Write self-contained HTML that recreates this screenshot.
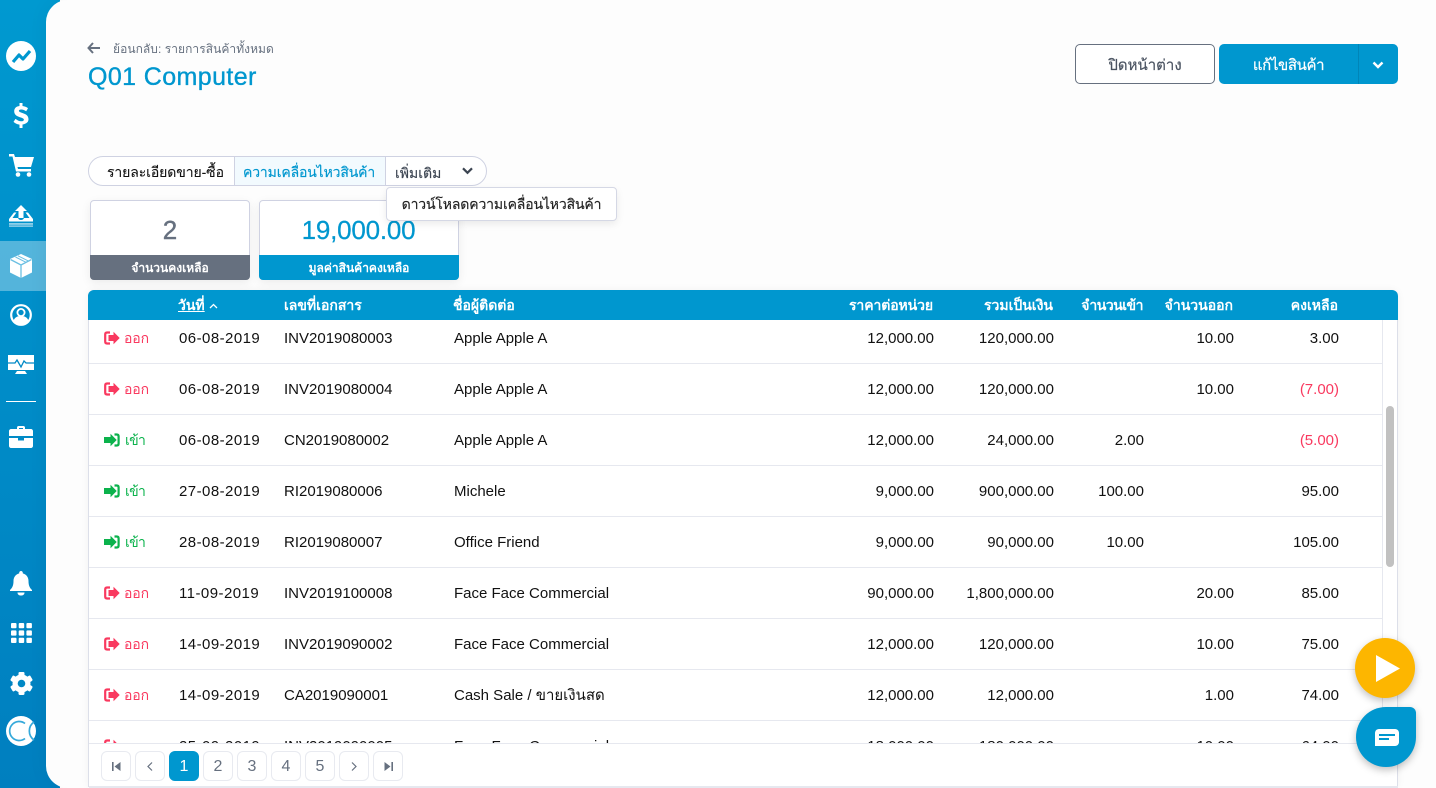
<!DOCTYPE html>
<html lang="th"><head><meta charset="utf-8"><title>Q01 Computer</title>
<style>
*{box-sizing:border-box}
html,body{margin:0;padding:0}
body{width:1436px;height:788px;overflow:hidden;position:relative;font-family:"Liberation Sans","Noto Sans CJK SC",sans-serif;font-size:14px;color:#111;background:#fff}
.a{position:absolute;white-space:nowrap}
#side{left:0;top:0;width:60px;height:788px;background:linear-gradient(#0099d0,#007fbf)}
#main{left:46px;top:0;width:1390px;height:788px;background:#fdfdfd;border-radius:22px 0 0 22px;box-shadow:0 0 20px rgba(0,0,0,.05)}
#active{left:0;top:241px;width:46px;height:50px;background:rgba(255,255,255,.33)}
.ic{position:absolute;fill:#fff}
.row{position:absolute;left:89px;width:1293px;height:51px;border-bottom:1px solid #e6e8ef}
.c{position:absolute;top:17px;line-height:17px;font-size:15px;white-space:nowrap}
.d{letter-spacing:.45px}
.t{font-size:14px;letter-spacing:-.1px;line-height:16px}
.tg{left:36px;font-size:14px;letter-spacing:-.7px;line-height:16px}
.r{text-align:right}
.red{color:#f9395f}.grn{color:#0bb24c}
.h{position:absolute;top:290px;line-height:31px;color:#fff;font-weight:bold;font-size:14px;white-space:nowrap}
.pg{position:absolute;top:751px;width:30px;height:30px;border:1px solid #e8eaf0;border-radius:6px;background:#fff;color:#66707f;text-align:center;line-height:29px;font-size:16px}
</style></head><body>
<div class="a" id="side"></div>
<div class="a" id="active"></div>
<div class="a" id="main"></div>

<svg class="ic" style="left:6px;top:41px" width="30" height="30" viewBox="0 0 30 30"><circle cx="15" cy="15" r="15"/><path d="M7 21l6-7 4 4 7-8" fill="none" stroke="#0097cf" stroke-width="3.2" stroke-linejoin="round"/></svg>
<svg class="ic" style="left:13px;top:103px" width="16" height="25" viewBox="0 0 16 25"><path d="M6.500 0h3v3c2.500.3 4.500 1.300 5.500 2.300l-1.800 3C11.800 7.300 10 6.500 8.200 6.500c-1.500 0-2.300.5-2.300 1.300 0 2.700 9.600 1.700 9.600 8.500 0 2.700-2.100 4.700-6 5.200V25h-3v-3.400C4 21.300 1.800 20.200.5 18.900l2-3c1.600 1.300 3.700 2.400 5.600 2.400 1.800 0 2.800-.6 2.800-1.700 0-2.800-9.700-1.700-9.700-8.400 0-2.800 2-4.900 5.300-5.200z"/></svg>
<svg class="ic" style="left:9px;top:154px" width="25" height="23" viewBox="0 0 25 23"><path d="M0 0h5l1 3h19l-3 10H8.500l.5 2h13v2.500H7L3.500 2.500H0z"/><circle cx="9" cy="20.500" r="2.300"/><circle cx="20" cy="20.500" r="2.300"/></svg>
<svg class="ic" style="left:8px;top:205px" width="26" height="22" viewBox="0 0 26 22"><path d="M13 0l6 6h-3.500v7h-5V6H7z"/><path d="M8.500 7.500H6L1 14v2.500h24V14l-5-6.500h-2.500l4 5.500H16c-.5 1.300-1.500 2-3 2s-2.500-.7-3-2H4.500z"/><rect x="1" y="18.300" width="24" height="1.300" opacity=".8"/><rect x="1" y="20.500" width="24" height="1.200" opacity=".7"/></svg>
<svg class="ic" style="left:9px;top:254px" width="24" height="24" viewBox="0 0 24 24"><path d="M12 0l11 5v13.500L12 24 1 18.500V5z"/><path d="M1.500 5.500L12 11l10.500-5.500M12 11v13" fill="none" stroke="#6bbfe2" stroke-width="1.300"/><path d="M6.500 3l10.500 5.300M9 1.800l10.500 5.300" fill="none" stroke="#6bbfe2" stroke-width="1"/></svg>
<svg class="ic" style="left:10px;top:304px" width="22" height="22" viewBox="0 0 22 22"><circle cx="11" cy="11" r="9.800" fill="none" stroke="#fff" stroke-width="2.200"/><circle cx="11" cy="8.500" r="3.600" fill="none" stroke="#fff" stroke-width="1.800"/><path d="M3.500 17c1-3.500 3.500-5 7.500-5s6.500 1.500 7.500 5c-2 3-4.500 4-7.500 4s-5.500-1-7.500-4z"/></svg>
<svg class="ic" style="left:8px;top:355px" width="26" height="21" viewBox="0 0 26 21"><path d="M0 0h26v15H0z"/><path d="M9 16h8l2 3H7z"/><path d="M0 8h7l2-3 4 7 3-6 2 2h8" fill="none" stroke="#0089c6" stroke-width="1.300"/></svg>
<div class="a" style="left:6px;top:401px;width:30px;height:1px;background:#fff"></div>
<svg class="ic" style="left:9px;top:426px" width="24" height="22" viewBox="0 0 24 22"><path d="M8 3V1.500C8 .700 8.700 0 9.500 0h5c.8 0 1.500.7 1.500 1.500V3h6c1 0 2 1 2 2v5H0V5c0-1 1-2 2-2zm2 0h4V2h-4z"/><path d="M0 12h9v2.500h6V12h9v8c0 1-1 2-2 2H2c-1 0-2-1-2-2z"/></svg>
<svg class="ic" style="left:10px;top:571px" width="22" height="25" viewBox="0 0 22 25"><path d="M11 0c1 0 1.800.8 1.800 1.800v.6C16.500 3.300 18.500 6.500 18.500 10c0 5 1.500 7 3.500 9v1H0v-1c2-2 3.500-4 3.500-9 0-3.500 2-6.700 5.700-7.600v-.6C9.200.8 10 0 11 0z"/><path d="M7.500 21.500h7c0 2-1.500 3-3.500 3s-3.500-1-3.500-3z"/></svg>
<svg class="ic" style="left:11px;top:623px" width="21" height="20" viewBox="0 0 21 20"><rect width="5.500" height="5.200" rx="1"/><rect x="7.700" width="5.500" height="5.200" rx="1"/><rect x="15.400" width="5.500" height="5.200" rx="1"/><rect y="7.400" width="5.500" height="5.200" rx="1"/><rect x="7.700" y="7.400" width="5.500" height="5.200" rx="1"/><rect x="15.400" y="7.400" width="5.500" height="5.200" rx="1"/><rect y="14.800" width="5.500" height="5.200" rx="1"/><rect x="7.700" y="14.800" width="5.500" height="5.200" rx="1"/><rect x="15.400" y="14.800" width="5.500" height="5.200" rx="1"/></svg>
<svg class="ic" style="left:10px;top:672px" width="23" height="23" viewBox="0 0 23 23"><g><rect x="8.500" y="0" width="6" height="23" rx="1.200"/><rect x="8.500" y="0" width="6" height="23" rx="1.200" transform="rotate(60 11.500 11.500)"/><rect x="8.500" y="0" width="6" height="23" rx="1.200" transform="rotate(120 11.500 11.500)"/><circle cx="11.500" cy="11.500" r="9"/></g><circle cx="11.500" cy="11.500" r="3.800" fill="#0088c5"/></svg>
<svg class="ic" style="left:6px;top:716px" width="30" height="30" viewBox="0 0 30 30"><circle cx="15" cy="15" r="15"/><path d="M19 7.500a9.500 9.500 0 100 15" fill="none" stroke="#35a9da" stroke-width="1.700"/><path d="M28 6a11 11 0 000 18" fill="none" stroke="#35a9da" stroke-width="1.700"/></svg>

<svg class="a" style="left:87px;top:42px" width="14" height="12" viewBox="0 0 14 12"><path d="M6 1L1.500 6 6 11M2 6h11" fill="none" stroke="#66707f" stroke-width="2"/></svg>
<div class="a" style="left:113px;top:41px;line-height:17px;font-size:12px;letter-spacing:.05px;color:#66707f">ย้อนกลับ: รายการสินค้าทั้งหมด</div>
<div class="a" style="left:88px;top:62px;line-height:30px;font-size:25px;color:#0097cf;letter-spacing:.4px;-webkit-text-stroke:.35px #0097cf">Q01 Computer</div>

<div class="a" style="left:1075px;top:44px;width:140px;height:40px;border:1px solid #66707f;border-radius:5px;background:#fff;text-align:center;line-height:41px;font-size:15px;color:#4a5361;-webkit-text-stroke:.2px #4a5361">ปิดหน้าต่าง</div>
<div class="a" style="left:1219px;top:44px;width:179px;height:40px;border-radius:5px;background:#0097cf;color:#fff"></div>
<div class="a" style="left:1219px;top:44px;width:140px;height:40px;text-align:center;line-height:43px;font-size:15px;letter-spacing:-.4px;color:#fff;border-right:1px solid #0085b8;-webkit-text-stroke:.2px #fff">แก้ไขสินค้า</div>
<svg class="a" style="left:1372px;top:61px" width="12" height="9" viewBox="0 0 12 9"><path d="M1.500 1.500L6 6l4.500-4.500" fill="none" stroke="#fff" stroke-width="2.400"/></svg>

<div class="a" style="left:88px;top:156px;width:399px;height:30px;border:1px solid #cfd2e2;border-radius:15px;background:#fff"></div>
<div class="a" style="left:234px;top:157px;width:152px;height:28px;background:#f2fafe;border-left:1px solid #cfd2e2;border-right:1px solid #cfd2e2"></div>
<div class="a" style="left:107px;top:164px;line-height:17px;font-size:14px;letter-spacing:-.1px;color:#111;-webkit-text-stroke:.1px #111">รายละเอียดขาย-ซื้อ</div>
<div class="a" style="left:243px;top:164px;line-height:17px;font-size:14px;letter-spacing:-.15px;color:#0097cf;-webkit-text-stroke:.15px #0097cf">ความเคลื่อนไหวสินค้า</div>
<div class="a" style="left:395px;top:165px;line-height:17px;font-size:14px;color:#3c4552;-webkit-text-stroke:.15px #3c4552">เพิ่มเติม</div>
<svg class="a" style="left:462px;top:167px" width="11" height="8" viewBox="0 0 11 8"><path d="M1 1.300l4.500 4.500L10 1.300" fill="none" stroke="#3c4552" stroke-width="2.200"/></svg>

<div class="a" style="left:90px;top:200px;width:160px;height:80px;border:1px solid #cfd2e2;border-radius:4px;background:#fff;box-shadow:0 3px 10px rgba(0,0,0,.07)"></div>
<div class="a" style="left:90px;top:255px;width:160px;height:25px;background:#66707f;border-radius:0 0 4px 4px;color:#fff;text-align:center;line-height:26px;font-size:12px;font-weight:bold">จำนวนคงเหลือ</div>
<div class="a" style="left:90px;top:215px;width:160px;text-align:center;line-height:30px;font-size:26px;color:#66707f;-webkit-text-stroke:.4px #66707f">2</div>
<div class="a" style="left:259px;top:200px;width:200px;height:80px;border:1px solid #cfd2e2;border-radius:4px;background:#fff;box-shadow:0 3px 10px rgba(0,0,0,.07)"></div>
<div class="a" style="left:259px;top:255px;width:200px;height:25px;background:#0097cf;border-radius:0 0 4px 4px;color:#fff;text-align:center;line-height:26px;font-size:12px;font-weight:bold">มูลค่าสินค้าคงเหลือ</div>
<div class="a" style="left:259px;top:215px;width:199px;text-align:center;line-height:30px;font-size:26px;letter-spacing:-.2px;color:#0097cf;-webkit-text-stroke:.25px #0097cf">19,000.00</div>

<div class="a" style="left:386px;top:187px;width:231px;height:34px;border:1px solid #d5d8e5;border-radius:4px;background:#fff;box-shadow:0 3px 8px rgba(0,0,0,.08);text-align:center;line-height:33px;font-size:14px;letter-spacing:-.15px;color:#222;-webkit-text-stroke:.15px #222;z-index:5">ดาวน์โหลดความเคลื่อนไหวสินค้า</div>

<div class="a" style="left:88px;top:290px;width:1310px;height:497px;background:#fff;border:1px solid #dcdfe9;border-radius:6px 6px 0 0;box-shadow:0 0 8px rgba(0,0,0,.05)"></div>
<div class="a" style="left:88px;top:290px;width:1310px;height:30px;background:#0097cf;border-radius:6px 6px 0 0"></div>
<div class="h" style="left:178px;text-decoration:underline">วันที่</div>
<svg class="a" style="left:209px;top:303px" width="9" height="6" viewBox="0 0 9 6"><path d="M1 5l3.500-3.500L8 5" fill="none" stroke="#fff" stroke-width="1.300"/></svg>
<div class="h" style="left:284px">เลขที่เอกสาร</div>
<div class="h" style="left:453px">ชื่อผู้ติดต่อ</div>
<div class="h r" style="right:503px;letter-spacing:-.1px">ราคาต่อหน่วย</div>
<div class="h r" style="right:383px">รวมเป็นเงิน</div>
<div class="h r" style="right:293px;letter-spacing:-.5px">จำนวนเข้า</div>
<div class="h r" style="right:203px">จำนวนออก</div>
<div class="h r" style="right:98px">คงเหลือ</div>

<div class="a" style="left:1382px;top:320px;width:1px;height:423px;background:#e6e8ef"></div>
<div class="a" style="left:1386px;top:406px;width:8px;height:161px;background:#c1c1c1;border-radius:4px"></div>

<svg width="0" height="0" style="position:absolute"><defs>
<symbol id="out" viewBox="0 0 16 14"><path fill="#f9395f" d="M9.500 .8L15.700 7l-6.200 6.200V10H4.500V4h5z"/><path fill="none" stroke="#f9395f" stroke-width="2.200" d="M6 1.500H3C1.800 1.500 1.200 2.200 1.200 3.500v7c0 1.300.6 2 1.800 2h3"/></symbol>
<symbol id="in" viewBox="0 0 16 14"><path fill="#0bb24c" d="M6.500 .8L12.700 7l-6.200 6.200V10H0V4h6.500z"/><path fill="none" stroke="#0bb24c" stroke-width="2.200" d="M10.500 1.500h2.300c1.200 0 1.800.7 1.800 2v7c0 1.300-.6 2-1.800 2h-2.300"/></symbol>
</defs></svg>

<div class="row" style="top:313px"><svg class="a" style="left:15px;top:18px" width="16" height="14"><use href="#out"/></svg><span class="c t red" style="left:35px">ออก</span><span class="c d" style="left:90px">06-08-2019</span><span class="c" style="left:195px">INV2019080003</span><span class="c" style="left:365px">Apple Apple A</span><span class="c r" style="right:448px">12,000.00</span><span class="c r" style="right:328px">120,000.00</span><span class="c r" style="right:148px">10.00</span><span class="c r" style="right:43px">3.00</span></div>
<div class="row" style="top:364px"><svg class="a" style="left:15px;top:18px" width="16" height="14"><use href="#out"/></svg><span class="c t red" style="left:35px">ออก</span><span class="c d" style="left:90px">06-08-2019</span><span class="c" style="left:195px">INV2019080004</span><span class="c" style="left:365px">Apple Apple A</span><span class="c r" style="right:448px">12,000.00</span><span class="c r" style="right:328px">120,000.00</span><span class="c r" style="right:148px">10.00</span><span class="c r red" style="right:43px">(7.00)</span></div>
<div class="row" style="top:415px"><svg class="a" style="left:15px;top:18px" width="16" height="14"><use href="#in"/></svg><span class="c tg grn">เข้า</span><span class="c d" style="left:90px">06-08-2019</span><span class="c" style="left:195px">CN2019080002</span><span class="c" style="left:365px">Apple Apple A</span><span class="c r" style="right:448px">12,000.00</span><span class="c r" style="right:328px">24,000.00</span><span class="c r" style="right:238px">2.00</span><span class="c r red" style="right:43px">(5.00)</span></div>
<div class="row" style="top:466px"><svg class="a" style="left:15px;top:18px" width="16" height="14"><use href="#in"/></svg><span class="c tg grn">เข้า</span><span class="c d" style="left:90px">27-08-2019</span><span class="c" style="left:195px">RI2019080006</span><span class="c" style="left:365px">Michele</span><span class="c r" style="right:448px">9,000.00</span><span class="c r" style="right:328px">900,000.00</span><span class="c r" style="right:238px">100.00</span><span class="c r" style="right:43px">95.00</span></div>
<div class="row" style="top:517px"><svg class="a" style="left:15px;top:18px" width="16" height="14"><use href="#in"/></svg><span class="c tg grn">เข้า</span><span class="c d" style="left:90px">28-08-2019</span><span class="c" style="left:195px">RI2019080007</span><span class="c" style="left:365px">Office Friend</span><span class="c r" style="right:448px">9,000.00</span><span class="c r" style="right:328px">90,000.00</span><span class="c r" style="right:238px">10.00</span><span class="c r" style="right:43px">105.00</span></div>
<div class="row" style="top:568px"><svg class="a" style="left:15px;top:18px" width="16" height="14"><use href="#out"/></svg><span class="c t red" style="left:35px">ออก</span><span class="c d" style="left:90px">11-09-2019</span><span class="c" style="left:195px">INV2019100008</span><span class="c" style="left:365px">Face Face Commercial</span><span class="c r" style="right:448px">90,000.00</span><span class="c r" style="right:328px">1,800,000.00</span><span class="c r" style="right:148px">20.00</span><span class="c r" style="right:43px">85.00</span></div>
<div class="row" style="top:619px"><svg class="a" style="left:15px;top:18px" width="16" height="14"><use href="#out"/></svg><span class="c t red" style="left:35px">ออก</span><span class="c d" style="left:90px">14-09-2019</span><span class="c" style="left:195px">INV2019090002</span><span class="c" style="left:365px">Face Face Commercial</span><span class="c r" style="right:448px">12,000.00</span><span class="c r" style="right:328px">120,000.00</span><span class="c r" style="right:148px">10.00</span><span class="c r" style="right:43px">75.00</span></div>
<div class="row" style="top:670px"><svg class="a" style="left:15px;top:18px" width="16" height="14"><use href="#out"/></svg><span class="c t red" style="left:35px">ออก</span><span class="c d" style="left:90px">14-09-2019</span><span class="c" style="left:195px">CA2019090001</span><span class="c" style="left:365px">Cash Sale / ขายเงินสด</span><span class="c r" style="right:448px">12,000.00</span><span class="c r" style="right:328px">12,000.00</span><span class="c r" style="right:148px">1.00</span><span class="c r" style="right:43px">74.00</span></div>
<div class="row" style="top:721px;border:0;height:22px;overflow:hidden"><svg class="a" style="left:15px;top:18px" width="16" height="14"><use href="#out"/></svg><span class="c t red" style="left:35px">ออก</span><span class="c d" style="left:90px">25-09-2019</span><span class="c" style="left:195px">INV2019090005</span><span class="c" style="left:365px">Face Face Commercial</span><span class="c r" style="right:448px">18,000.00</span><span class="c r" style="right:328px">180,000.00</span><span class="c r" style="right:148px">10.00</span><span class="c r" style="right:43px">64.00</span></div>

<div class="a" style="left:89px;top:743px;width:1308px;height:43px;background:#fff;border-top:1px solid #e6e8ef"></div>
<div class="a" style="left:89px;top:786px;width:1309px;height:2px;background:#e6e8ef"></div>
<div class="pg" style="left:101px"><svg width="9" height="9" viewBox="0 0 9 9"><path fill="#66707f" d="M0 0h1.600v9H0zM8.500 0v9L2.500 4.500z"/></svg></div>
<div class="pg" style="left:135px"><svg width="6" height="9" viewBox="0 0 6 9"><path fill="none" stroke="#66707f" stroke-width="1.200" d="M5 .5l-4 4 4 4"/></svg></div>
<div class="pg" style="left:169px;background:#0097cf;border-color:#0097cf;color:#fff">1</div>
<div class="pg" style="left:203px">2</div>
<div class="pg" style="left:237px">3</div>
<div class="pg" style="left:271px">4</div>
<div class="pg" style="left:305px">5</div>
<div class="pg" style="left:339px"><svg width="6" height="9" viewBox="0 0 6 9"><path fill="none" stroke="#66707f" stroke-width="1.200" d="M1 .5l4 4-4 4"/></svg></div>
<div class="pg" style="left:373px"><svg width="9" height="9" viewBox="0 0 9 9"><path fill="#66707f" d="M9 0H7.400v9H9zM.5 0v9l6-4.500z"/></svg></div>

<div class="a" style="left:1355px;top:638px;width:60px;height:60px;border-radius:50%;background:#fdb600;box-shadow:0 3px 8px rgba(0,0,0,.25)"></div>
<svg class="a" style="left:1376px;top:655px" width="24" height="27" viewBox="0 0 24 27"><path fill="#fff" d="M0 0l24 13.500L0 27z"/></svg>
<div class="a" style="left:1356px;top:707px;width:60px;height:60px;border-radius:50% 6px 50% 50%;background:#0097cf;box-shadow:0 3px 8px rgba(0,0,0,.25)"></div>
<svg class="a" style="left:1375px;top:729px" width="24" height="17" viewBox="0 0 24 17"><path fill="#fff" d="M4 0h16c2.200 0 4 1.800 4 4v9c0 2.200-1.800 4-4 4H0V4c0-2.200 1.800-4 4-4z"/><path fill="#0097cf" d="M4 5h16v2H4zM4 9h10v2H4z"/></svg>
</body></html>
